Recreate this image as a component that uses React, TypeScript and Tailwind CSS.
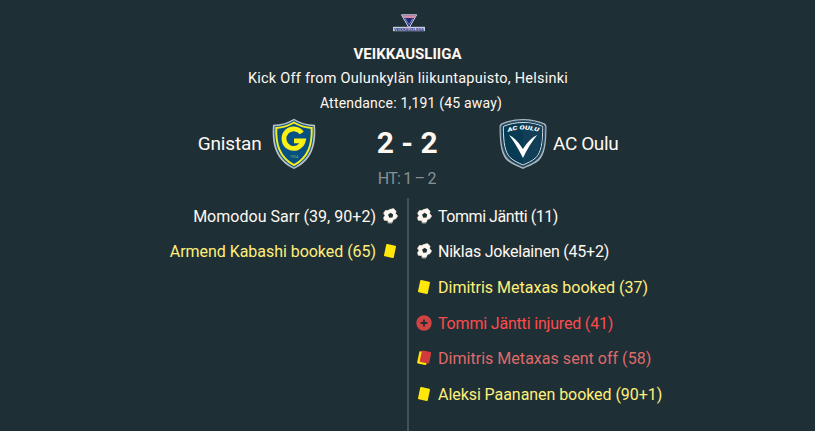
import type { ReactNode } from "react"

type EventKind = "goal" | "yellow" | "injury" | "secondYellow"

interface MatchEvent {
  kind: EventKind
  text: string
  tracking: string
}

const homeEvents: MatchEvent[] = [
  { kind: "goal", text: "Momodou Sarr (39, 90+2)", tracking: "tracking-[0.02px]" },
  { kind: "yellow", text: "Armend Kabashi booked (65)", tracking: "tracking-[-0.04px]" },
]

const awayEvents: MatchEvent[] = [
  { kind: "goal", text: "Tommi Jäntti (11)", tracking: "tracking-[-0.45px]" },
  { kind: "goal", text: "Niklas Jokelainen (45+2)", tracking: "tracking-[-0.22px]" },
  { kind: "yellow", text: "Dimitris Metaxas booked (37)", tracking: "tracking-[0px]" },
  { kind: "injury", text: "Tommi Jäntti injured (41)", tracking: "tracking-[-0.18px]" },
  { kind: "secondYellow", text: "Dimitris Metaxas sent off (58)", tracking: "tracking-[0.03px]" },
  { kind: "yellow", text: "Aleksi Paananen booked (90+1)", tracking: "tracking-[-0.06px]" },
]

const eventColors: Record<EventKind, string> = {
  goal: "text-[#fff8f0]",
  yellow: "text-[#fff07a]",
  injury: "text-[#ff4b4b]",
  secondYellow: "text-[#df6a6a]",
}

const eventIcons: Record<EventKind, ReactNode> = {
  goal: (
    <>
      <path d="M7.500 1.600L11.500.6 14 3.200 13.600 5.600 15.600 8 13.800 10.800 11.400 11.400 10.200 14.300 6.500 14.500 5.600 12.600 2.200 12.200 1.600 9.400 3 7.800 1.600 5.200 3.500 2.400 6 2.600z" fill="#fff8f0" stroke="#fff8f0" strokeWidth=".6" strokeLinejoin="round" />
      <path d="M8.600 4.700l2.600 1.700-.7 3-3.200.3-1.300-2.900z" fill="#1f2f36" />
      <path d="M5.200 14.600l1.600.7h3.400" fill="none" stroke="#8b9191" strokeWidth=".8" />
    </>
  ),
  yellow: <rect x="3" y="1.700" width="10" height="12.600" rx="1" fill="#ffe70a" transform="rotate(12 8 8)" />,
  injury: (
    <>
      <circle cx="8" cy="8" r="7.700" fill="#d14343" />
      <path d="M8 4.500v7M4.500 8h7" stroke="#1f2f36" strokeWidth="1.800" />
    </>
  ),
  secondYellow: (
    <>
      <rect x="2.200" y="2" width="9.400" height="12.400" rx="1" fill="#ffe70a" transform="rotate(12 7 8)" />
      <rect x="4.600" y="1" width="9.600" height="11.800" rx="1" fill="#d13b3b" transform="rotate(12 9 7.500)" />
    </>
  ),
}

function EventRow({ event, reverse }: { event: MatchEvent; reverse?: boolean }) {
  return (
    <li className={`flex h-[35.6px] items-center gap-1.5 ${reverse ? "flex-row-reverse" : ""} ${eventColors[event.kind]}`}>
      <svg viewBox="0 0 16 16" className="size-4 shrink-0">
        {eventIcons[event.kind]}
      </svg>
      <span className={`whitespace-nowrap pt-0.5 text-[16px] ${event.tracking}`}>{event.text}</span>
    </li>
  )
}

function LeagueLogo() {
  return (
    <svg viewBox="0 0 34 20" className="h-5 w-[34px]">
      <path d="M9.500.8h15.200L17 14z" fill="#262f83" stroke="#d3d8ec" strokeWidth="1" />
      <path d="M10 1.200h14.200l-1.600 2.800H11.600z" fill="#d08fa5" />
      <path d="M12.500 4.500l3 .8L17 4l1.600 1.300 3-.8L17 11z" fill="#8791cc" />
      <path d="M14 5l3 5 3-5-3-1z" fill="#20276f" />
      <rect x="1" y="12.800" width="32" height="4.400" fill="#c5cbe2" />
      <text x="2" y="16.600" fontSize="4.400" fontWeight="700" textLength="30" lengthAdjust="spacing" fill="#262f83">VEIKKAUSLIIGA</text>
    </svg>
  )
}

function GnistanCrest() {
  return (
    <svg viewBox="0 0 44 52" className="h-[52px] w-[44px]">
      <path d="M22 .8C16 4.700 8.500 6.800 1 6.700C-.5 26 3 42 22 51C41 42 44.500 26 43 6.700C35.500 6.800 28 4.700 22 .8z" fill="#b9c3c7" />
      <path d="M22 2.300C16 6 9 8.200 2.500 8.200C1.500 26 5 40.500 22 49.400C39 40.500 42.500 26 41.500 8.200C35 8.200 28 6 22 2.300z" fill="#13528a" />
      <path d="M22 4.500C16.500 7.800 10.500 9.600 4.300 9.900C3.700 25.500 7 39 22 47.200C37 39 40.300 25.500 39.700 9.900C33.500 9.600 27.500 7.800 22 4.500z" fill="#075083" stroke="#f4ed20" strokeWidth="2" />
      <path d="M29.800 15A9.800 9.800 0 1 0 31.300 22.800H22" fill="none" stroke="#faf016" strokeWidth="4.800" />
      <text x="22" y="39.500" textAnchor="middle" fontSize="3.500" fill="#a5ad4d">1924</text>
    </svg>
  )
}

function OuluCrest() {
  return (
    <svg viewBox="0 0 48 52" className="h-[52px] w-[48px]">
      <path d="M24 1C16 1 9 2.700 2.200 5.500Q.4 6.500.5 9C.7 27 2 36 8 42.500C12 46 19 48.500 24 51C29 48.500 36 46 40 42.500C46 36 47.300 27 47.500 9Q47.600 6.500 45.800 5.500C39 2.700 32 1 24 1z" fill="#aab8c1" />
      <path d="M24 2.700C16 2.700 9.500 4.300 3.500 6.800Q2 7.500 2.100 9.500C2.500 27 4 35 9.500 41C14 45 20 46.800 24 49C28 46.800 34 45 38.500 41C44 35 45.500 27 45.900 9.500Q46 7.500 44.500 6.800C38.500 4.300 32 2.700 24 2.700z" fill="#173b50" stroke="#31546a" />
      <path d="M24 4.500C16 4.500 10 6 4.300 8.500C4.500 26 6 34 11 39.500C15 43.300 20 45 24 47C28 45 33 43.300 37 39.500C42 34 43.500 26 43.700 8.500C38 6 32 4.500 24 4.500z" fill="#073b54" stroke="#dce3e7" strokeWidth="1" />
      <path d="M24 5v41c4-2 9-3.500 12.500-7C41.500 33.500 43 26 43.200 9C37.500 6.300 31.500 5 24 5z" fill="#123f57" />
      <path d="M10 17Q17 20 23.900 31Q31 20 38.200 17Q30 27 24 40Q17 26 10 17z" fill="#fff" />
      <path id="ouluNameArc" d="M9 14Q24 9 40 14" fill="none" />
      <text fontSize="5.600" fontWeight="900" fontStyle="italic" fill="#fff">
        <textPath href="#ouluNameArc" textLength="31" lengthAdjust="spacingAndGlyphs">AC OULU</textPath>
      </text>
    </svg>
  )
}

export default function App() {
  return (
    <main className="flex h-[431px] w-[815px] flex-col overflow-hidden bg-[#1f2f36] font-['Roboto',sans-serif] text-[#fff8f0]">
      <header className="flex flex-col items-center pt-[14px] text-center">
        <div className="pl-0.5">
          <LeagueLogo />
        </div>
        <h1 className="mt-[8px] text-[15px] leading-[25px] font-bold">VEIKKAUSLIIGA</h1>
        <p className="pl-px text-[14.5px] leading-[23px] tracking-[0.24px]">Kick Off from Oulunkylän liikuntapuisto, Helsinki</p>
        <p className="pl-[7px] text-[14px] leading-[26px] tracking-[0.19px]">Attendance: 1,191 (45 away)</p>
      </header>

      <section className="grid h-[82px] grid-cols-[315.500px_182.500px_317px]">
        <div className="flex items-start justify-end gap-2.5 pt-[2px]">
          <span className="pt-px text-[19px] leading-[50px] tracking-[-0.15px]">Gnistan</span>
          <GnistanCrest />
        </div>
        <div className="flex flex-col items-center pt-[8px]">
          <span className="pl-px text-[30px] leading-[38px] font-bold">2 - 2</span>
          <span className="mt-[7px] text-[16px] leading-[20px] tracking-[-0.8px] text-[#879195]">HT: 1 – 2</span>
        </div>
        <div className="flex items-start gap-1.5 pt-[2px] pl-px">
          <OuluCrest />
          <span className="pt-px text-[19px] leading-[50px] tracking-[-0.4px]">AC Oulu</span>
        </div>
      </section>

      <section className="grid flex-1 grid-cols-[407px_408px]">
        <ul className="pr-[9px]">
          {homeEvents.map((event) => (
            <EventRow key={event.text} event={event} reverse />
          ))}
        </ul>
        <ul className="border-l-2 border-[#465159] pl-[7px]">
          {awayEvents.map((event) => (
            <EventRow key={event.text} event={event} />
          ))}
        </ul>
      </section>
    </main>
  )
}
